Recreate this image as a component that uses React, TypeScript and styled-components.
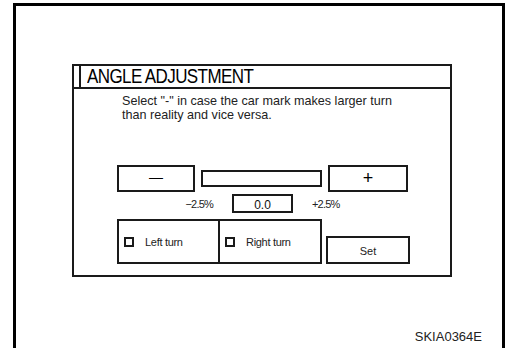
import React from 'react'
import styled, { createGlobalStyle } from 'styled-components'

const GlobalStyle = createGlobalStyle`
  html, body {
    margin: 0;
    padding: 0;
    background: #fff;
  }
  body {
    font-family: 'Liberation Sans', Arial, sans-serif;
    color: #111;
  }
  * {
    box-sizing: border-box;
  }
`

const Frame = styled.div`
  margin: 3px 0 0 13px;
  width: 492px;
  height: 345px;
  border: 3px solid #000;
  border-bottom: none;
  display: flex;
  flex-direction: column;
  padding: 58px 0 0 56px;
`

const Panel = styled.div`
  width: 380px;
  height: 213px;
  border: 2px solid #1a1a1a;
  display: flex;
  flex-direction: column;
`

const Header = styled.div`
  height: 23px;
  border-bottom: 2px solid #1a1a1a;
  padding-left: 5px;
  display: flex;
`

const Title = styled.div`
  border-left: 2px solid #1a1a1a;
  padding-left: 6px;
  font-size: 20px;
  line-height: 21px;
  color: #000;
  white-space: nowrap;

  span {
    display: inline-block;
    letter-spacing: -0.7px;
    transform: scaleX(0.85);
    transform-origin: left center;
  }
`

const Body = styled.div`
  padding: 5px 0 0 43px;
  display: flex;
  flex-direction: column;
`

const Note = styled.p`
  margin: 0 0 0 5px;
  font-size: 12.6px;
  line-height: 14px;
  color: #222;
`

const Controls = styled.div`
  margin-top: 43px;
  display: flex;
  flex-direction: column;
`

const Row = styled.div<{ $gap: number; $align?: string }>`
  display: flex;
  align-items: ${(p) => p.$align || 'center'};
  gap: ${(p) => p.$gap}px;
`

const StepButton = styled.div<{ $w: number; $size: number; $lift?: number }>`
  width: ${(p) => p.$w}px;
  height: 27px;
  border: 2px solid #1a1a1a;
  display: flex;
  align-items: center;
  justify-content: center;
  padding-bottom: ${(p) => p.$lift || 0}px;
  font-size: ${(p) => p.$size}px;
  color: #000;
`

const Track = styled.div`
  width: 121px;
  height: 17px;
  border: 2px solid #1a1a1a;
`

const Scale = styled.div`
  margin-top: 2px;
  display: flex;
  align-items: center;
`

const ScaleLabel = styled.span<{ $right?: boolean }>`
  width: 96px;
  text-align: ${(p) => (p.$right ? 'right' : 'left')};
  font-size: 11px;
  letter-spacing: -0.8px;
  color: #222;
`

const Value = styled.div`
  width: 61px;
  height: 19px;
  margin: 0 19px;
  border: 2px solid #1a1a1a;
  display: flex;
  align-items: center;
  justify-content: center;
  font-size: 12px;
  padding-top: 2px;
`

const TurnGroup = styled.div`
  display: flex;
  border: 2px solid #1a1a1a;
`

const TurnCell = styled.div<{ $first?: boolean }>`
  width: ${(p) => (p.$first ? 101 : 100)}px;
  height: 41px;
  border-right: ${(p) => (p.$first ? '2px solid #1a1a1a' : 'none')};
  display: flex;
  align-items: center;
  padding: 0 0 0 5px;
  gap: 11px;
  font-size: 11px;
  letter-spacing: -0.3px;
  color: #222;
`

const Box = styled.span`
  width: 10px;
  height: 10px;
  border: 2px solid #1a1a1a;
  flex-shrink: 0;
`

const SetButton = styled.div`
  width: 84px;
  height: 28px;
  border: 2px solid #1a1a1a;
  display: flex;
  align-items: center;
  justify-content: center;
  font-size: 11px;
  padding-top: 1px;
  color: #222;
`

const Caption = styled.div`
  margin-top: auto;
  align-self: flex-end;
  padding: 0 20px 4px 0;
  font-size: 13px;
  color: #222;
`

export default function App() {
  return (
    <>
      <GlobalStyle />
      <Frame>
        <Panel>
          <Header>
            <Title>
              <span>ANGLE ADJUSTMENT</span>
            </Title>
          </Header>
          <Body>
            <Note>
              Select "-" in case the car mark makes larger turn
              <br />
              than reality and vice versa.
            </Note>
            <Controls>
              <Row $gap={6}>
                <StepButton $w={78} $size={14} $lift={3}>—</StepButton>
                <Track />
                <StepButton $w={80} $size={18}>+</StepButton>
              </Row>
              <Scale>
                <ScaleLabel $right>−2.5%</ScaleLabel>
                <Value>0.0</Value>
                <ScaleLabel>+2.5%</ScaleLabel>
              </Scale>
              <Row $gap={4} $align="flex-end" style={{ marginTop: 6 }}>
                <TurnGroup>
                  <TurnCell $first>
                    <Box />
                    Left turn
                  </TurnCell>
                  <TurnCell>
                    <Box />
                    Right turn
                  </TurnCell>
                </TurnGroup>
                <SetButton>Set</SetButton>
              </Row>
            </Controls>
          </Body>
        </Panel>
        <Caption>SKIA0364E</Caption>
      </Frame>
    </>
  )
}
